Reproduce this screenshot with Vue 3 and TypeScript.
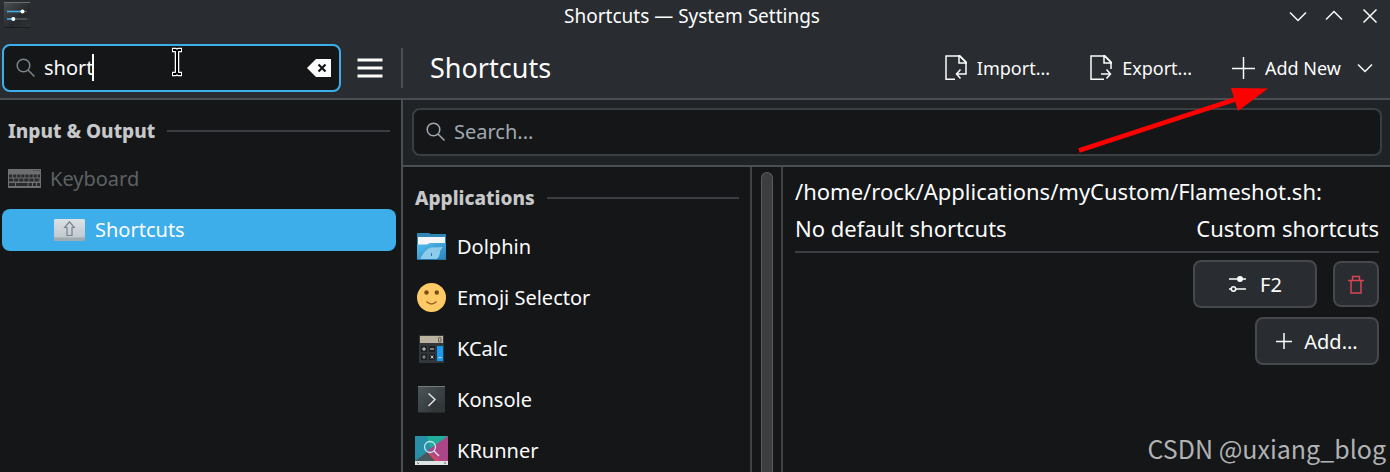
<script setup lang="ts">
import { ref } from 'vue'

type AppIcon = 'dolphin' | 'emoji' | 'kcalc' | 'konsole' | 'krunner'

const sidebarQuery = ref<string>('short')
const shortcutQuery = ref<string>('')
const applications: { name: string; icon: AppIcon }[] = [
  { name: 'Dolphin', icon: 'dolphin' },
  { name: 'Emoji Selector', icon: 'emoji' },
  { name: 'KCalc', icon: 'kcalc' },
  { name: 'Konsole', icon: 'konsole' },
  { name: 'KRunner', icon: 'krunner' },
]
</script>

<template>
  <div class="window">
    <header class="titlebar">
      <svg class="app-icon" width="26" height="26" viewBox="0 0 26 26" aria-hidden="true">
        <defs>
          <linearGradient id="settings-bg" x1="0" y1="0" x2="1" y2="1">
            <stop offset="0" stop-color="#4d5053" />
            <stop offset="0.6" stop-color="#26292b" />
            <stop offset="1" stop-color="#303335" />
          </linearGradient>
        </defs>
        <rect width="26" height="26" fill="url(#settings-bg)" />
        <path d="M0 .5H26" stroke="#6a6d70" />
        <path d="M0 25.5H26" stroke="#1a1c1e" />
        <path d="M3 9.5H23M3 17H23" stroke="#56595c" stroke-width="1.6" />
        <path d="M3 9.5H18M3 17H9" stroke="#3daee9" stroke-width="1.6" />
        <circle cx="18.5" cy="9.5" r="2" fill="#fff" />
        <circle cx="9.3" cy="17" r="2" fill="#fff" />
      </svg>
      <h1 class="window-title">Shortcuts — System Settings</h1>
      <div class="window-buttons">
        <button type="button" aria-label="Minimize">
          <svg width="20" height="20" viewBox="0 0 20 20"><path d="M2 6.5 10 14.5 18 6.5" /></svg>
        </button>
        <button type="button" aria-label="Maximize">
          <svg width="20" height="20" viewBox="0 0 20 20"><path d="M2 13.5 10 5.5 18 13.5" /></svg>
        </button>
        <button type="button" aria-label="Close">
          <svg width="20" height="20" viewBox="0 0 20 20"><path d="M3.5 3.500 16.500 16.500M16.500 3.500 3.500 16.500" /></svg>
        </button>
      </div>
    </header>

    <div class="toolbar">
      <div class="sidebar-tools">
        <div class="field focused">
          <svg class="magnifier" width="20" height="20" viewBox="0 0 20 20" aria-hidden="true">
            <circle cx="7.5" cy="7.5" r="6.3" /><path d="M12 12 18.5 18.5" />
          </svg>
          <input v-model="sidebarQuery" type="text" aria-label="Search settings" />
          <span class="caret"></span>
          <button class="clear" type="button" aria-label="Clear search">
            <svg width="24" height="18" viewBox="0 0 24 18">
              <path d="M0 9 9 0H24V18H9Z" fill="#fcfcfc" />
              <path d="M11.5 5.5 18.5 12.5M18.5 5.5 11.5 12.5" stroke="#141618" stroke-width="2.2" />
            </svg>
          </button>
          <svg class="pointer" width="12" height="30" viewBox="0 0 12 30" aria-hidden="true">
            <path d="M1 3H4.500L6 4 7.500 3H11M6 4V26M1 27H4.500L6 26 7.500 27H11" stroke="#fff" stroke-width="4.500" />
            <path d="M2 3H4.500L6 4 7.500 3H10M6 4V26M2 27H4.500L6 26 7.500 27H10" stroke="#000" stroke-width="2" />
          </svg>
        </div>
        <button class="menu" type="button" aria-label="Menu">
          <svg width="26" height="20" viewBox="0 0 26 20"><path d="M.5 2H25.500M.5 10H25.500M.5 18H25.500" stroke="#fcfcfc" stroke-width="3" /></svg>
        </button>
        <span class="divider"></span>
      </div>
      <h2 class="page-title">Shortcuts</h2>
      <div class="actions">
        <button type="button">
          <svg width="22" height="26" viewBox="0 0 22 26">
            <path d="M10 24.300H1V1H15L21 7V19H12M15.500 14.500 11.500 19 15.500 23.500" />
            <path d="M14 .5 21.500 8H14Z" fill="#fcfcfc" stroke="none" />
          </svg>
          <span>Import...</span>
        </button>
        <button type="button">
          <svg width="22" height="26" viewBox="0 0 22 26">
            <path d="M14 24.300H1V1H15L21 7V14M11 19H20.500M16.500 14.500 20.500 19 16.500 23.500" />
            <path d="M14 .5 21.500 8H14Z" fill="#fcfcfc" stroke="none" />
          </svg>
          <span>Export...</span>
        </button>
        <button type="button">
          <svg width="23" height="24" viewBox="0 0 23 24"><path d="M11.500 1V23M0 12.500H23" /></svg>
          <span>Add New</span>
          <svg class="drop" width="16" height="12" viewBox="0 0 16 12"><path d="M1 2.500 8 9.500 15 2.500" /></svg>
        </button>
      </div>
    </div>

    <div class="body">
      <nav class="sidebar">
        <h3 class="section">Input &amp; Output</h3>
        <a class="nav-item parent" href="#keyboard">
          <svg width="33" height="20" viewBox="0 0 33 20" aria-hidden="true">
            <rect width="33" height="19" fill="#6d6f71" />
            <path d="M25 1.500H26.500M28 1.500H29.500M31 1.500H32" stroke="#404244" />
            <path d="M1 7H32" stroke="#292b2d" stroke-width="3.200" stroke-dasharray="3.200 .9" />
            <path d="M1 11H32" stroke="#292b2d" stroke-width="3.200" stroke-dasharray="4.200 .9" />
            <path d="M1 15.500H7M8 15.500H19.500M20.500 15.500H24M25 15.500H28M29 15.500H32" stroke="#292b2d" stroke-width="3" />
          </svg>
          <span>Keyboard</span>
        </a>
        <a class="nav-item child" href="#shortcuts" aria-current="page">
          <svg width="31" height="22" viewBox="0 0 31 22" aria-hidden="true">
            <defs>
              <linearGradient id="key-bg" x1="0" y1="0" x2="0" y2="1">
                <stop offset="0" stop-color="#dce1e5" /><stop offset="1" stop-color="#c1c9cf" />
              </linearGradient>
            </defs>
            <rect width="31" height="22" rx="1.500" fill="#9eabb3" />
            <rect width="31" height="18.500" rx="1.500" fill="url(#key-bg)" />
            <path d="M15.500 2.800 20.300 8.500H18V16.500H13V8.500H10.700Z" fill="none" stroke="#75838c" stroke-width="1.200" />
          </svg>
          <span>Shortcuts</span>
        </a>
      </nav>

      <main class="content">
        <div class="search-band">
          <div class="field">
            <svg class="magnifier" width="20" height="20" viewBox="0 0 20 20" aria-hidden="true">
              <circle cx="7.500" cy="7.500" r="6.300" /><path d="M12 12 18.500 18.500" />
            </svg>
            <input v-model="shortcutQuery" type="text" placeholder="Search..." aria-label="Search shortcuts" />
          </div>
        </div>
        <div class="panes">
          <section class="app-list">
            <h3 class="section">Applications</h3>
            <ul>
              <li v-for="app in applications" :key="app.name">
                <button type="button">
                  <svg v-if="app.icon === 'dolphin'" width="33" height="32" viewBox="0 0 33 32">
                    <defs>
                      <linearGradient id="folder" x1="0" y1="0" x2="1" y2="1">
                        <stop offset="0" stop-color="#53bdf0" /><stop offset="1" stop-color="#2a83b8" />
                      </linearGradient>
                    </defs>
                    <path d="M2 2H14L16 3H31V22H2Z" fill="#2f87b7" />
                    <rect x="3" y="6" width="27" height="10" fill="#f4f6f7" />
                    <path d="M2 13.500H12L15 12H31V29H2Z" fill="url(#folder)" />
                    <path d="M5 28.500C9 20 14 15.500 20 16.500L28 16 25 20C25 25 23 27 21 28.500Z" fill="#8dcbed" />
                    <path d="M16.500 22V25" stroke="#2f78a5" />
                    <path d="M2 28.500H31" stroke="#2777a6" />
                  </svg>
                  <svg v-else-if="app.icon === 'emoji'" width="33" height="32" viewBox="0 0 33 32">
                    <circle cx="16.500" cy="15.500" r="14.500" fill="#fdca66" />
                    <circle cx="11.500" cy="10.500" r="2.200" fill="#7e4b16" />
                    <circle cx="21.800" cy="10.500" r="2.200" fill="#7e4b16" />
                    <path d="M11.500 19.500Q16.500 24.500 21.500 19.500" fill="none" stroke="#9d6423" stroke-width="1.500" />
                  </svg>
                  <svg v-else-if="app.icon === 'kcalc'" width="33" height="32" viewBox="0 0 33 32">
                    <rect x="4" y="2" width="25" height="28" fill="#31363a" />
                    <rect x="5" y="3" width="23" height="7" fill="#bbb3a0" />
                    <rect x="23.500" y="4.500" width="2.500" height="4.500" rx="1" fill="none" stroke="#5b574e" />
                    <path d="M6 13H12V19H6ZM14 13H20V19H14ZM6 21H12V27H6ZM14 21H20V27H14Z" fill="#1c2023" />
                    <rect x="22" y="13" width="6" height="15" fill="#159bf3" />
                    <path d="M7 16H11M9 14V18M15 16H19M7.500 24H10.500M15.800 22.500 18.300 25.500M18.300 22.500 15.800 25.500M23.500 24.500H26.500" fill="none" stroke="#d5d8da" />
                    <path d="M8.500 22.500H9.500M8.500 25.500H9.500" stroke="#9a9da0" />
                  </svg>
                  <svg v-else-if="app.icon === 'konsole'" width="33" height="32" viewBox="0 0 33 32">
                    <defs>
                      <linearGradient id="terminal" x1="0" y1="0" x2="1" y2="1">
                        <stop offset="0" stop-color="#4c5558" /><stop offset="1" stop-color="#2b3033" />
                      </linearGradient>
                    </defs>
                    <rect x="3" y="2" width="27" height="27" fill="url(#terminal)" />
                    <path d="M3 2.500H30" stroke="#737b7e" />
                    <path d="M20 15.500 30 25V29H19L14 22Z" fill="#303538" />
                    <path d="M13.500 9.500 20 15.500 13.500 22" fill="none" stroke="#e0e3e4" stroke-width="1.500" />
                    <path d="M3 28.500H30" stroke="#24282a" />
                  </svg>
                  <svg v-else width="33" height="32" viewBox="0 0 33 32">
                    <rect y="1" width="33" height="29" fill="#22a4ac" />
                    <path d="M0 1H33L13 16 0 26Z" fill="#288fa9" />
                    <path d="M12 1H33L16 15Z" fill="#20ad9a" />
                    <path d="M33 1V26H25L13 15Z" fill="#ad4689" />
                    <path d="M13 16 26 26H16L11 17Z" fill="#d84463" />
                    <path d="M0 26 12 17 20 26Z" fill="#47575c" />
                    <rect y="26" width="33" height="4" fill="#e0e3e4" />
                    <path d="M2 27.500 4 29M30 27V29" stroke="#555b5f" />
                    <circle cx="15" cy="12" r="5.500" fill="none" stroke="#c4e6e7" stroke-width="1.300" />
                    <path d="M19 16 24 21" stroke="#f2dce8" stroke-width="1.400" />
                  </svg>
                  <span>{{ app.name }}</span>
                </button>
              </li>
            </ul>
          </section>
          <div class="scrollbar"><span class="thumb"></span></div>
          <section class="details">
            <p>/home/rock/Applications/myCustom/Flameshot.sh:</p>
            <div class="columns">
              <span>No default shortcuts</span>
              <span>Custom shortcuts</span>
            </div>
            <div class="binding">
              <button class="key-button" type="button">
                <svg width="20" height="20" viewBox="0 0 20 20">
                  <path d="M1 5H18M1 15H4M7 15H18" stroke-width="1.500" />
                  <circle cx="12" cy="5" r="3" fill="#fcfcfc" stroke="none" />
                  <circle cx="5.500" cy="15" r="2.200" />
                </svg>
                <span>F2</span>
              </button>
              <button class="delete" type="button" aria-label="Delete shortcut">
                <svg width="16" height="20" viewBox="0 0 16 20">
                  <path d="M0 6.500H16M4.500 6V2.500H11.500V6M3 7V19H13V7" />
                </svg>
              </button>
            </div>
            <button class="key-button add" type="button">
              <svg width="16" height="18" viewBox="0 0 16 18"><path d="M8 1V17M0 9.500H16" /></svg>
              <span>Add...</span>
            </button>
          </section>
        </div>
      </main>
    </div>

    <svg class="arrow" width="192" height="66" viewBox="0 0 192 66" aria-hidden="true">
      <path d="M1 63.500 160 11.500" stroke="#f00" stroke-width="4.500" />
      <path d="M153 1 190 1.500 160 24Z" fill="#f00" />
    </svg>
    <div class="watermark">CSDN @uxiang_blog</div>
  </div>
</template>

<style>
body {
  margin: 0;
  background: #141618;
}
</style>

<style scoped>
* {
  box-sizing: border-box;
}
.window {
  position: relative;
  display: flex;
  flex-direction: column;
  height: 100vh;
  overflow: hidden;
  background: #141618;
  color: #fcfcfc;
  font-family: "Noto Sans", sans-serif;
  font-size: 20px;
  line-height: 28px;
}
button {
  display: flex;
  align-items: center;
  padding: 0;
  border: 0;
  background: none;
  color: inherit;
  font: inherit;
}
svg {
  display: block;
  flex: none;
}
h1,
h2,
h3,
p,
ul {
  margin: 0;
  padding: 0;
  font-weight: 400;
}
.titlebar {
  display: grid;
  grid-template-columns: 1fr auto 1fr;
  align-items: center;
  flex: none;
  height: 38px;
  padding: 0 10px 6px 4px;
  background: #292c30;
}
.app-icon {
  align-self: start;
  margin-top: 2px;
}
.window-title {
  font-size: 19px;
  line-height: 28px;
}
.window-buttons {
  display: flex;
  justify-content: flex-end;
  gap: 16px;
}
.window-buttons path {
  fill: none;
  stroke: #fcfcfc;
  stroke-width: 1.5;
}
.toolbar {
  display: flex;
  align-items: center;
  flex: none;
  height: 62px;
  border-bottom: 2px solid #4b4f54;
  background: #292c30;
}
.sidebar-tools {
  display: flex;
  align-items: center;
  flex: none;
  width: 403px;
  padding-left: 2px;
}
.field {
  position: relative;
  display: flex;
  align-items: center;
  gap: 8px;
  height: 48px;
  padding: 0 8px 0 12px;
  border: 2px solid #3b3e41;
  border-radius: 8px;
  background: #141618;
}
.field.focused {
  width: 339px;
  border-color: #3daee9;
}
.field input {
  flex: 1;
  min-width: 0;
  padding: 0;
  border: 0;
  outline: 0;
  background: none;
  color: inherit;
  font: inherit;
}
.field input::placeholder {
  color: #a1a9b1;
  opacity: 1;
}
.magnifier {
  fill: none;
  stroke: #a1a9b1;
  stroke-width: 1.5;
}
.focused .magnifier {
  stroke: #7d848b;
}
.caret {
  position: absolute;
  left: 88px;
  top: 8px;
  width: 2px;
  height: 27px;
  background: #fcfcfc;
}
.pointer {
  position: absolute;
  left: 167px;
  top: 1px;
  fill: none;
}
.menu {
  margin-left: 16px;
}
.divider {
  width: 2px;
  height: 40px;
  margin-left: auto;
  background: #4b4f54;
}
.page-title {
  flex: 1;
  padding-left: 27px;
  font-size: 27px;
  line-height: 36px;
}
.actions {
  display: flex;
  gap: 40px;
  padding-right: 17px;
  font-size: 18px;
}
.actions button {
  gap: 10px;
}
.actions path,
.key-button svg,
.delete svg {
  fill: none;
  stroke: #fcfcfc;
  stroke-width: 1.5;
}
.actions .drop {
  margin-left: 6px;
}
.body {
  display: flex;
  flex: 1;
  min-height: 0;
}
.sidebar {
  flex: none;
  width: 403px;
  padding-top: 17px;
  border-right: 2px solid #4b4f54;
}
.section {
  display: flex;
  align-items: center;
  gap: 12px;
  padding: 0 11px 0 8px;
  color: #c7c8c9;
  font-size: 19px;
  font-weight: 800;
  line-height: 28px;
}
.section::after {
  flex: 1;
  height: 2px;
  background: #3b3f43;
  content: "";
}
.nav-item {
  display: flex;
  align-items: center;
  color: inherit;
  text-decoration: none;
}
.nav-item.parent {
  gap: 9px;
  height: 42px;
  margin-top: 13px;
  padding-left: 8px;
  color: #5e6163;
}
.nav-item.child {
  gap: 10px;
  height: 42px;
  margin: 9px 5px 0 2px;
  padding-left: 52px;
  border-radius: 8px;
  background: #3daee9;
}
.content {
  display: flex;
  flex: 1;
  flex-direction: column;
  min-width: 0;
}
.search-band {
  flex: none;
  padding: 8px 8px 9px 9px;
  border-bottom: 2px solid #4b4f54;
  background: #202326;
}
.panes {
  display: flex;
  flex: 1;
  min-height: 0;
}
.app-list {
  flex: none;
  width: 349px;
  padding-top: 17px;
  border-right: 2px solid #3f4347;
}
.app-list .section {
  padding-left: 12px;
}
.app-list ul {
  padding-top: 9px;
  list-style: none;
}
.app-list li button {
  gap: 9px;
  height: 51px;
  padding-left: 12px;
}
.scrollbar {
  flex: none;
  width: 31px;
  padding: 5px 8px 0 9px;
  border-right: 2px solid #3f4347;
}
.thumb {
  display: block;
  height: 100%;
  border: 1px solid #5a5c5e;
  border-bottom: 0;
  border-radius: 6px 6px 0 0;
  background: #3d3e40;
}
.details {
  display: flex;
  flex: 1;
  flex-direction: column;
  min-width: 0;
  padding: 6px 11px 0 12px;
  font-size: 22px;
  line-height: 37px;
}
.columns {
  display: flex;
  justify-content: space-between;
  padding-bottom: 4px;
  border-bottom: 2px solid #3b3f43;
}
.binding {
  display: flex;
  align-items: center;
  align-self: flex-end;
  gap: 16px;
  margin-top: 7px;
}
.key-button,
.delete {
  justify-content: center;
  height: 48px;
  border: 2px solid #45484c;
  border-radius: 8px;
  background: #292c30;
  font-size: 20px;
}
.key-button {
  gap: 12px;
  width: 124px;
}
.key-button.add {
  align-self: flex-end;
  margin-top: 9px;
}
.delete {
  width: 46px;
  height: 46px;
}
.delete svg {
  stroke: #da4453;
}
.arrow {
  position: absolute;
  top: 87px;
  right: 120px;
}
.watermark {
  position: absolute;
  right: 4px;
  bottom: 6px;
  color: #b1b2b3;
  font-family: "Noto Sans CJK SC", sans-serif;
  font-size: 25px;
  line-height: 36px;
}
</style>
